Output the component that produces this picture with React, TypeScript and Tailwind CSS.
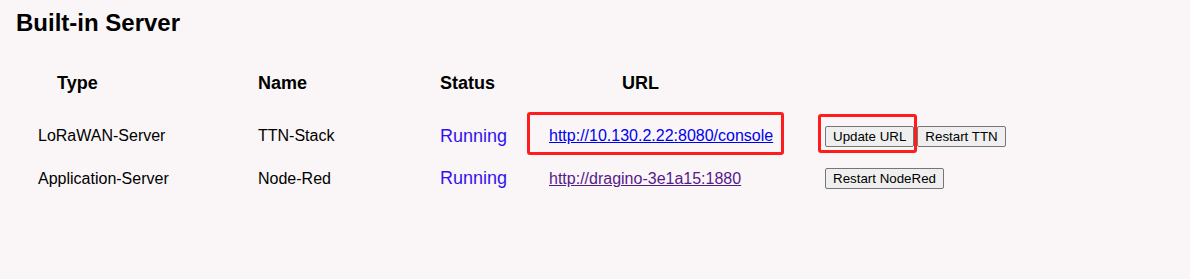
export default function App() {
  const rows = [
    {
      type: "LoRaWAN-Server",
      name: "TTN-Stack",
      url: "http://10.130.2.22:8080/console",
      visited: false,
      buttons: ["Update URL", "Restart TTN"],
      mark: true,
    },
    {
      type: "Application-Server",
      name: "Node-Red",
      url: "http://dragino-3e1a15:1880",
      visited: true,
      buttons: ["Restart NodeRed"],
      mark: false,
    },
  ];

  return (
    <main className="min-h-screen w-full bg-[#faf6f7] text-black font-['Liberation_Sans',Arial,sans-serif]">
      <h1 className="pl-4 pt-[9px] text-[24px] font-bold leading-[28px]">
        Built-in Server
      </h1>

      {/* header */}
      <div className="mt-[26px] flex h-10 items-center pl-[38px] text-[18px] font-bold">
        <div className="w-[220px] pl-[19px]">Type</div>
        <div className="w-[182px]">Name</div>
        <div className="w-[109px]">Status</div>
        <div className="w-[276px] pl-[73px]">URL</div>
      </div>

      {/* rows */}
      <div className="mt-[12px]">
        {rows.map((r, i) => (
          <div
            key={i}
            className={`flex items-center pl-[38px] text-[16px] ${i === 0 ? "h-[42px]" : "h-[43px]"}`}
          >
            <div className="w-[220px]">{r.type}</div>
            <div className="w-[182px]">{r.name}</div>
            <div className="w-[109px] text-[18px] text-[#3311ee]">Running</div>
            <div className="relative flex h-full w-[276px] items-center">
              <a
                href="#"
                className={`underline ${r.visited ? "text-[#551a8b]" : "text-[#0000ee]"}`}
              >
                {r.url}
              </a>
              {r.mark && (
                <div className="absolute left-[-22px] top-[-3px] h-[43px] w-[257px] rounded-[3px] border-[3px] border-[#ff1c1c]" />
              )}
            </div>
            <div className="relative flex h-full items-center gap-[3px]">
              {r.buttons.map((b) => (
                <button
                  key={b}
                  className="rounded-[2px] border border-[#767676] bg-[#efefef] px-[7px] py-[2px] text-[13.33px] leading-[15px] text-black"
                >
                  {b}
                </button>
              ))}
              {r.mark && (
                <div className="absolute left-[-7px] top-[-1px] h-[39px] w-[99px] rounded-[3px] border-[3px] border-[#ff1c1c]" />
              )}
            </div>
          </div>
        ))}
      </div>
    </main>
  );
}
